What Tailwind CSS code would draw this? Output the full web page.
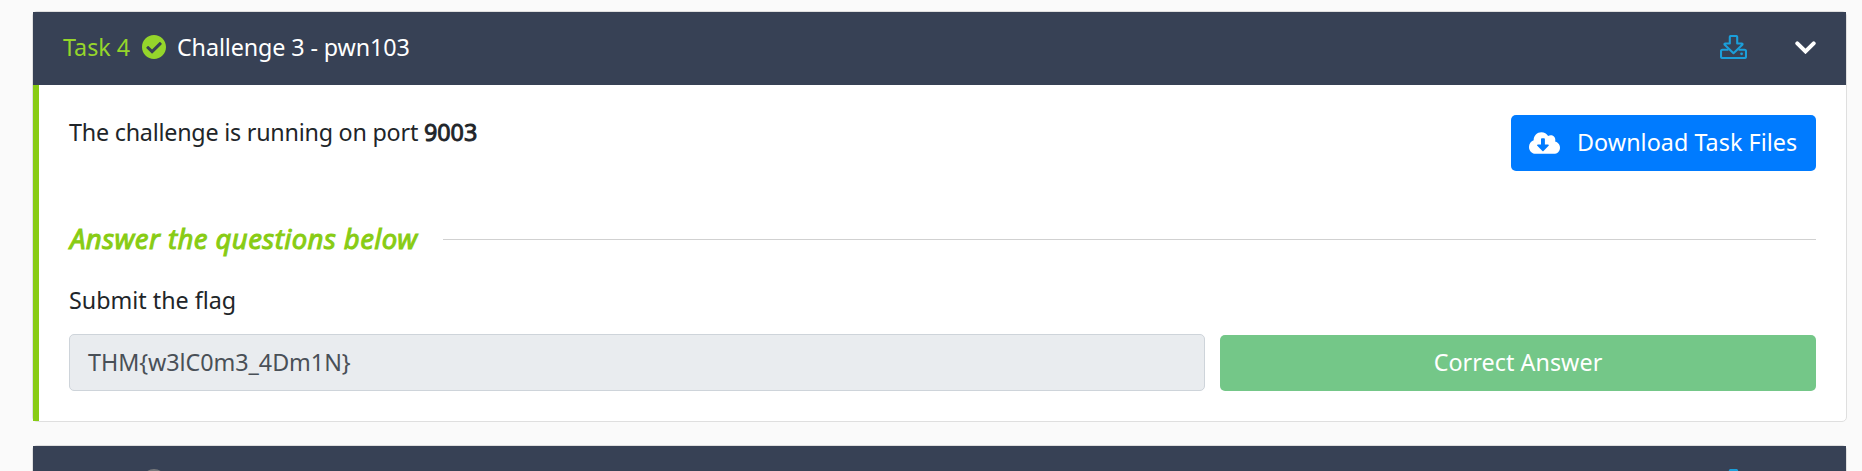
<!DOCTYPE html>
<html lang="en"><head><meta charset="utf-8"><title>Tasks</title>
<script src="https://cdn.jsdelivr.net/npm/@tailwindcss/browser@4"></script></head>
<body class="bg-[#fafafa] font-['Noto_Sans',sans-serif] text-[23.3px] leading-9 text-[#212529]">
<svg class="hidden">
<symbol id="check" viewBox="8 8 496 496"><path d="M504 256c0 136.967-111.033 248-248 248S8 392.967 8 256 119.033 8 256 8s248 111.033 248 248zM227.314 387.314l184-184c6.248-6.248 6.248-16.379 0-22.627l-22.627-22.627c-6.248-6.249-16.379-6.249-22.628 0L216 308.118l-70.059-70.059c-6.248-6.248-16.379-6.248-22.628 0l-22.627 22.627c-6.248 6.248-6.248 16.379 0 22.627l104 104c6.249 6.249 16.379 6.249 22.628.001z"/></symbol>
<symbol id="drive" viewBox="0 0 27 24"><g fill="none" stroke="currentColor" stroke-width="2.100" stroke-linejoin="round"><path d="M10.800 1h5.400q1 0 1 1v6.500h4.600q1.200.3.500 1.300L13.500 18.200 4.700 9.800q-.7-1 .5-1.300h4.600V2q0-1 1-1z"/><path d="M8.500 14.700H2.500a1.500 1.500 0 0 0-1.500 1.500v5.300A1.500 1.500 0 0 0 2.500 23h22a1.500 1.500 0 0 0 1.500-1.500v-5.300a1.500 1.500 0 0 0-1.500-1.500h-6"/></g><circle cx="21.600" cy="18.800" r="1.400" fill="currentColor"/></symbol>
</svg>
<main class="flex h-[471px] flex-col gap-[23px] overflow-hidden pl-8 pr-[15px] pt-[11px]">
<section class="h-[411px] shrink-0 rounded-[5px] border border-[#dfdfdf] bg-white">
<header class="flex h-[73px] items-center bg-[#374155] pb-[3px] pl-[30px] pr-[30px]">
<span class="w-[79px] whitespace-nowrap text-[#95d52b]">Task 4</span>
<svg class="size-6 shrink-0 fill-[#95d52b]"><use href="#check"/></svg>
<span class="ml-[11px] tracking-[-0.1px] text-white">Challenge 3 - pwn103</span>
<svg class="ml-auto h-6 w-[27px] text-[#1b9fda]"><use href="#drive"/></svg>
<svg class="ml-[48px] h-[13px] w-[21px]" viewBox="0 0 21 13"><path d="M2.300 2.300l8.200 8.100 8.200-8.100" fill="none" stroke="#fff" stroke-width="4" stroke-linecap="round"/></svg>
</header>
<div class="h-[336px] border-l-6 border-[#88cc14] pl-[30px] pr-[30px] pt-[30px]">
<div class="flex h-[84px] items-start justify-between">
<p class="-mt-px whitespace-pre"><span class="tracking-[-0.22px]">The challenge is running on port </span><span class="[-webkit-text-stroke:0.9px_#212529]">9003</span></p>
<button class="flex h-14 w-[305px] items-center rounded-[5px] bg-[#007bff] pl-[18px] text-white"><svg class="h-[22px] w-[31px]" viewBox="0 32 640 448"><path fill="#fff" d="M537.600 226.600c4.100-10.700 6.400-22.400 6.400-34.600 0-53-43-96-96-96-19.700 0-38.100 6-53.300 16.200C367 64.200 315.300 32 256 32c-88.400 0-160 71.600-160 160 0 2.700.1 5.400.2 8.100C40.200 219.800 0 273.200 0 336c0 79.500 64.500 144 144 144h368c70.700 0 128-57.300 128-128 0-61.900-44-113.600-102.400-125.400zm-132.900 88.700L299.300 420.700c-6.200 6.200-16.400 6.200-22.600 0L171.300 315.300c-10.100-10.100-2.900-27.300 11.300-27.300H248V176c0-8.800 7.200-16 16-16h48c8.800 0 16 7.200 16 16v112h65.400c14.200 0 21.400 17.200 11.300 27.300z"/></svg><span class="ml-[17px] whitespace-nowrap pb-[2px] tracking-[0.06px]">Download Task Files</span></button>
</div>
<div class="mt-[22px] flex h-9 items-center"><h4 class="w-[374px] whitespace-nowrap pl-px text-[27.500px] tracking-[0.42px] text-[#88cc14]"><span class="italic [-webkit-text-stroke:1px_#88cc14]">Answer the questions below</span></h4><div class="h-px grow bg-[#d1d1d1]"></div></div>
<p class="mt-[25px]">Submit the flag</p>
<div class="mt-4 flex items-end gap-[15px]"><div class="flex h-[57px] w-[1136px] items-center rounded-[5px] border border-[#ced4da] bg-[#e9ecef] pb-[2px] pl-[18px] tracking-[-0.04px] text-[#495057]">THM{w3lC0m3_4Dm1N}</div>
<button class="h-14 grow rounded-[5px] bg-[#74c788] pb-[2px] tracking-[0.06px] text-white">Correct Answer</button></div>
</div></section>
<section class="h-[75px] shrink-0 rounded-[5px] border border-[#dfdfdf]"><header class="flex h-[73px] items-start bg-[#374155] pl-[109px] pr-[99px] pt-[23px]"><svg class="size-6 fill-[#77797c]"><use href="#check"/></svg><svg class="ml-auto h-6 w-[27px] text-[#1b9fda]"><use href="#drive"/></svg></header></section>
</main>
</body></html>
